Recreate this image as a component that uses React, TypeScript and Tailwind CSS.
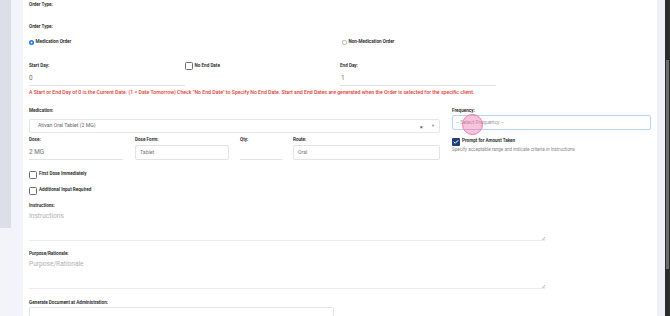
import { Check } from "lucide-react";

const Label = ({ text }: { text: string }) => (
    <div className="h-[9px] leading-[9px] text-[4.6px] font-semibold text-[#222] whitespace-nowrap">{text}</div>
);

const Box = ({ checked }: { checked?: boolean }) =>
    checked ? (
        <div className="flex h-[8px] w-[8px] shrink-0 items-center justify-center rounded-[1px] bg-[#1f3f78]">
            <Check className="h-[6px] w-[6px] text-white" strokeWidth={4} />
        </div>
    ) : (
        <div className="h-[8px] w-[8px] shrink-0 rounded-[1.5px] border border-[#6b6b6b] bg-white" />
    );

const CheckRow = ({ text, checked }: { text: string; checked?: boolean }) => (
    <div className="flex items-start gap-[2px]">
        <div className="mt-[2px]">
            <Box checked={checked} />
        </div>
        <span className="h-[9px] leading-[9px] text-[4.6px] font-semibold text-[#222] whitespace-nowrap">{text}</span>
    </div>
);

const Radio = ({ text, checked }: { text: string; checked?: boolean }) => (
    <div className="flex h-[9px] items-center gap-[1.5px]">
        <svg className="h-[5px] w-[5px]" viewBox="0 0 10 10">
            {checked ? (
                <>
                    <circle cx="5" cy="5" r="5" fill="#1a73e8" />
                    <circle cx="5" cy="5" r="2" fill="#fff" />
                </>
            ) : (
                <circle cx="5" cy="5" r="4.4" fill="#fff" stroke="#8f8f8f" strokeWidth="1.2" />
            )}
        </svg>
        <span className="text-[4.6px] font-semibold text-[#222]">{text}</span>
    </div>
);

const LineInput = ({ value, className }: { value: string; className: string }) => (
    <div className={`h-[15px] border-b border-[#e2e2e2] pt-[3px] leading-[9px] text-[6.4px] text-[#707070] ${className}`}>{value}</div>
);

const BoxInput = ({ value, className }: { value: string; className: string }) => (
    <div className={`h-[15px] rounded-[2px] border border-[#e3e3e3] px-[4px] leading-[13px] text-[5.2px] text-[#777] ${className}`}>
        {value}
    </div>
);

const Area = ({ placeholder }: { placeholder: string }) => (
    <div className="relative w-[516px]">
        <textarea
            placeholder={placeholder}
            className="block h-[31px] w-full resize-none border-0 border-b border-[#ececec] pt-[2px] leading-[9px] text-[6.6px] text-[#777] outline-none placeholder:text-[#b0b0b0]"
        />
        <svg className="absolute bottom-[1px] right-0 h-[3px] w-[3px]" viewBox="0 0 3 3">
            <path d="M3 0 L0 3 M3 1.5 L1.5 3" stroke="#999" strokeWidth="0.6" />
        </svg>
    </div>
);

export default function App() {
    return (
        <div className="flex h-[316px] w-[670px] overflow-hidden bg-[#f3f4f9] font-['Roboto',sans-serif]">
            <div className="w-[11px] shrink-0">
                <div className="h-[228px] bg-[#dcdfe7]" />
            </div>
            <div className="w-[12px] shrink-0" />
            <main className="w-[634px] shrink-0 bg-white px-[6px]">
                <Label text="Order Type:" />
                <div className="mt-[13px]">
                    <Label text="Order Type:" />
                </div>
                <div className="mt-[7px] grid grid-cols-2">
                    <Radio text="Medication Order" checked />
                    <div className="pl-[2px]">
                        <Radio text="Non-Medication Order" />
                    </div>
                </div>

                <div className="mt-[14px] grid grid-cols-4">
                    <div>
                        <Label text="Start Day:" />
                        <LineInput value="0" className="mt-[1px] h-[14px] pt-[2px]" />
                    </div>
                    <div className="flex items-start gap-[2px]">
                        <div className="mt-[1px]">
                            <Box />
                        </div>
                        <span className="h-[9px] leading-[9px] text-[4.6px] font-semibold text-[#222]">No End Date</span>
                    </div>
                    <div>
                        <Label text="End Day:" />
                        <LineInput value="1" className="mt-[1px] h-[14px] pl-[1px] pt-[2px]" />
                    </div>
                    <div />
                </div>
                <p className="mt-[1px] h-[10px] leading-[10px] whitespace-nowrap text-[5.18px] font-medium text-[#e53935]">
                    A Start or End Day of 0 is the Current Date. (1 = Date Tomorrow) Check "No End Date" to Specify No End Date. Start and End Dates are generated when the Order is selected for the specific client.
                </p>

                <div className="mt-[9px] flex gap-[12px]">
                    <div className="w-[411px] shrink-0">
                        <Label text="Medication:" />
                        <div className="mt-[4px] flex h-[14px] items-center rounded-[2px] border border-[#e6e6e6] pl-[8px] pr-[4px] text-[5.2px] text-[#666]">
                            <span className="flex-1">Ativan Oral Tablet (2 MG)</span>
                            <span className="text-[6px] text-[#333]">×</span>
                            <span className="ml-[8px] text-[4px] text-[#888]">▼</span>
                        </div>
                        <div className="mt-[3px] flex gap-[11px]">
                            <div className="w-[95px]">
                                <div className="h-[8px] leading-[8px] text-[4.6px] font-semibold text-[#222]">Dose:</div>
                                <LineInput value="2 MG" className="mt-[1px] w-[94px]" />
                            </div>
                            <div className="w-[94px]">
                                <div className="h-[8px] leading-[8px] text-[4.6px] font-semibold text-[#222]">Dose Form:</div>
                                <BoxInput value="Tablet" className="mt-[1px]" />
                            </div>
                            <div className="w-[42px]">
                                <div className="h-[8px] leading-[8px] text-[4.6px] font-semibold text-[#222]">Qty:</div>
                                <LineInput value="" className="mt-[1px]" />
                            </div>
                            <div className="flex-1">
                                <div className="h-[8px] leading-[8px] text-[4.6px] font-semibold text-[#222]">Route:</div>
                                <BoxInput value="Oral" className="mt-[1px]" />
                            </div>
                        </div>
                        <div className="mt-[9px]">
                            <CheckRow text="First Dose Immediately" />
                        </div>
                        <div className="mt-[6px]">
                            <CheckRow text="Additional Input Required" />
                        </div>
                    </div>
                    <div className="relative flex-1">
                        <Label text="Frequency:" />
                        <div className="flex h-[15px] items-center rounded-[2px] border border-[#b9d3f2] px-[3px] text-[5.2px] text-[#999]">
                            -- Select Frequency --
                        </div>
                        <div className="mt-[6px]">
                            <CheckRow text="Prompt for Amount Taken" checked />
                        </div>
                        <div className="h-[8px] leading-[8px] whitespace-nowrap text-[4.6px] text-[#888]">
                            Specify acceptable range and indicate criteria in Instructions
                        </div>
                        <div className="absolute left-[10px] top-[8px] h-[21px] w-[21px] rounded-full border border-[#e57fb0] bg-[#f06aa8]/40" />
                    </div>
                </div>

                <div className="mt-[6px]">
                    <Label text="Instructions:" />
                    <Area placeholder="Instructions" />
                </div>
                <div className="mt-[8px]">
                    <Label text="Purpose/Rationale:" />
                    <Area placeholder="Purpose/Rationale" />
                </div>
                <div className="mt-[9px]">
                    <Label text="Generate Document at Administration:" />
                    <div className="h-[15px] w-[305px] rounded-[2px] border border-[#e3e3e3]" />
                </div>
            </main>
            <div className="w-[8px] shrink-0 bg-[#eef0f8]" />
            <div className="w-[5px] shrink-0 bg-[#2b2b2b] pt-[60px]">
                <div className="ml-[1px] h-[209px] w-[3px] bg-[#6b6b6b]" />
            </div>
        </div>
    );
}
